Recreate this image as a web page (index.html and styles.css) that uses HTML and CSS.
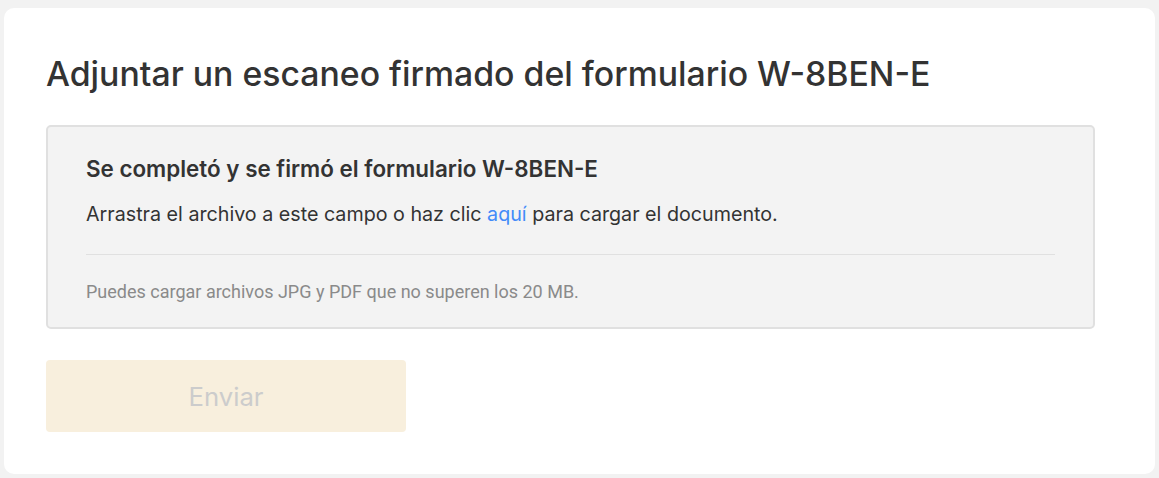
FILE: index.html
```html
<!DOCTYPE html>
<html lang="es">
<head>
<meta charset="utf-8">
<link rel="stylesheet" href="styles.css">
</head>
<body>
<main class="card">
  <h1 class="title">Adjuntar un escaneo firmado del formulario W-8BEN-E</h1>
  <section class="dropzone">
    <h2 class="dz-title">Se completó y se firmó el formulario W-8BEN-E</h2>
    <p class="dz-text">Arrastra el archivo a este campo o haz clic <a class="dz-link" href="#">aquí</a> para cargar el documento.</p>
    <div class="dz-divider"></div>
    <p class="dz-note">Puedes cargar archivos JPG y PDF que no superen los 20 MB.</p>
  </section>
  <button class="submit" type="button" disabled>Enviar</button>
</main>
</body>
</html>
```
FILE: styles.css
```css
html, body {
  margin: 0;
  padding: 0;
  background: #f2f2f2;
}
body {
  padding: 8px 4px 4px 4px;
  font-family: Inter, "Noto Sans", sans-serif;
  color: #333333;
}
.card {
  background: #ffffff;
  border-radius: 10px;
  height: 466px;
  box-sizing: border-box;
  padding: 46px 60px 0 42px;
  display: flex;
  flex-direction: column;
  align-items: flex-start;
}
.title {
  margin: 0;
  font-size: 33.8px;
  line-height: 40px;
  font-weight: 500;
  color: #333333;
}
.dropzone {
  align-self: stretch;
  margin-top: 31px;
  background: #f3f3f3;
  border: 2px solid #e0e0e0;
  border-radius: 5px;
  padding: 29px 38px 20px 38px;
  height: 204px;
  box-sizing: border-box;
}
.dz-title {
  margin: 0;
  font-size: 22.4px;
  line-height: 26px;
  font-weight: 600;
  color: #333333;
}
.dz-text {
  margin: 20px 0 0 0;
  font-size: 19.7px;
  line-height: 24px;
  color: #333333;
}
.dz-link {
  color: #428bf9;
  text-decoration: none;
}
.dz-divider {
  margin-top: 28px;
  height: 1px;
  background: #e0e0e0;
}
.dz-note {
  margin: 27px 0 0 0;
  font-family: Roboto, "Noto Sans", sans-serif;
  font-size: 18px;
  line-height: 20px;
  color: #8a8a8a;
}
.submit {
  margin-top: 31px;
  width: 360px;
  height: 72px;
  border: none;
  border-radius: 4px;
  background: #f8efdd;
  color: #cccccc;
  font-family: inherit;
  font-size: 25.7px;
  font-weight: 400;
}
```
